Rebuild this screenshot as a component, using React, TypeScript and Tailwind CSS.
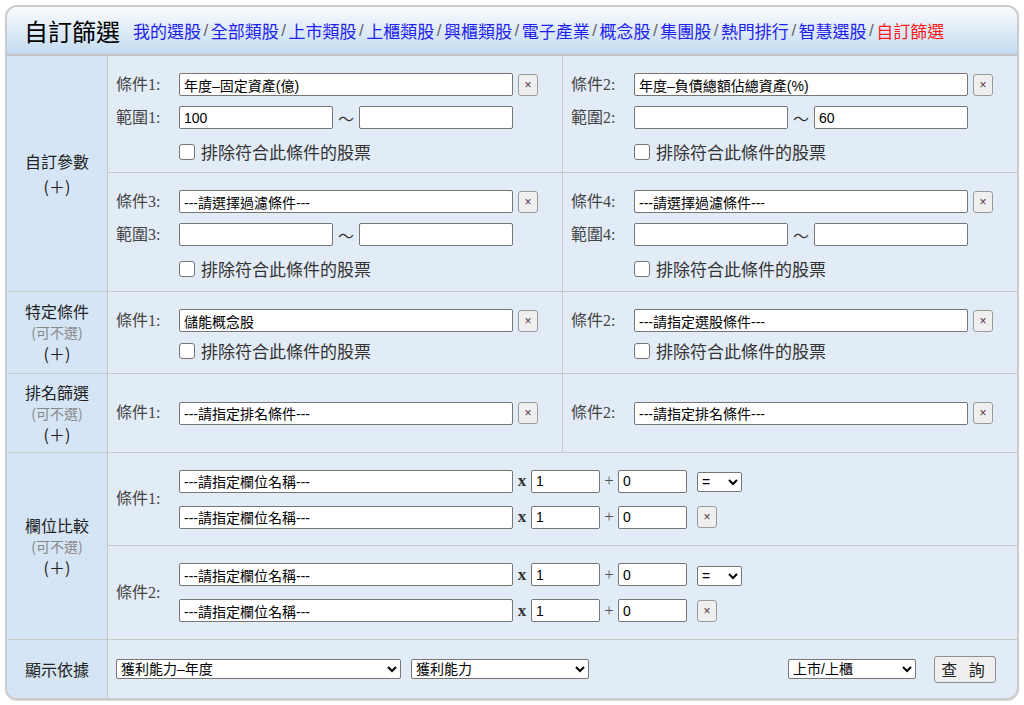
import React from "react";

const serif = "font-['Liberation_Serif','Noto_Sans_CJK_TC',serif]";
const sans = "font-['Liberation_Sans','Noto_Sans_CJK_TC',sans-serif]";
const cjk = "font-['Noto_Sans_CJK_TC','Liberation_Sans',sans-serif]";

const navLinks = ["我的選股", "全部類股", "上市類股", "上櫃類股", "興櫃類股", "電子產業", "概念股", "集團股", "熱門排行", "智慧選股"];

function Field({ value = "", className = "w-[334px]" }: { value?: string; className?: string }) {
  return (
    <input
      defaultValue={value}
      className={`${className} h-[23px] shrink-0 bg-white border border-[#767676] rounded-[2px] px-[4px] text-[14px] text-black outline-none ${sans}`}
    />
  );
}

function XBtn() {
  return (
    <button className={`w-[20px] h-[22px] shrink-0 bg-[#efefef] border border-[#9a9a9a] rounded-[3px] text-[12px] leading-none text-[#553344] flex items-center justify-center ${sans}`}>
      ×
    </button>
  );
}

function Label({ children }: { children: React.ReactNode }) {
  return <span className={`w-[63px] shrink-0 text-[16px] text-[#444] ${serif}`}>{children}</span>;
}

function Exclude() {
  return (
    <label className="flex items-center h-[22px] gap-[6px]">
      <input type="checkbox" className="appearance-none w-[16px] h-[16px] m-0 bg-white border border-[#767676] rounded-[3px]" />
      <span className={`text-[17px] text-[#333] ${cjk}`}>排除符合此條件的股票</span>
    </label>
  );
}

function RangeCell({ n, cond, from = "", to = "", left }: { n: number; cond: string; from?: string; to?: string; left?: boolean }) {
  return (
    <div className={`pt-[17px] pl-[8px] ${left ? "w-[455px] border-r border-[#c8c8c8]" : "flex-1"}`}>
      <div className="flex items-center h-[23px]">
        <Label>條件{n}:</Label>
        <Field value={cond} />
        <div className="ml-[5px]">
          <XBtn />
        </div>
      </div>
      <div className="flex items-center h-[23px] mt-[10px]">
        <Label>範圍{n}:</Label>
        <Field value={from} className="w-[154px]" />
        <span className={`w-[26px] text-center text-[16px] text-[#333] ${cjk}`}>～</span>
        <Field value={to} className="w-[154px]" />
      </div>
      <div className="mt-[12px] ml-[63px]">
        <Exclude />
      </div>
    </div>
  );
}

function SimpleCell({ n, cond, exclude, left }: { n: number; cond: string; exclude?: boolean; left?: boolean }) {
  return (
    <div className={`pl-[8px] flex flex-col ${exclude ? "pt-[17px]" : "justify-center"} ${left ? "w-[455px] border-r border-[#c8c8c8]" : "flex-1"}`}>
      <div className="flex items-center h-[23px]">
        <Label>條件{n}:</Label>
        <Field value={cond} />
        <div className="ml-[5px]">
          <XBtn />
        </div>
      </div>
      {exclude && (
        <div className="mt-[8px] ml-[63px]">
          <Exclude />
        </div>
      )}
    </div>
  );
}

function Side({ title, optional = true }: { title: string; optional?: boolean }) {
  return (
    <div className={`w-[101px] shrink-0 bg-[#d5e5f5] border-r border-[#c8c8c8] flex flex-col items-center justify-center leading-[21px] ${cjk}`}>
      <span className="text-[16px] text-[#222]">{title}</span>
      {optional && <span className="text-[14px] text-[#888]">(可不選)</span>}
      <span className={`text-[16px] text-[#222] ${optional ? "" : "mt-[4px]"}`}>(＋)</span>
    </div>
  );
}

function CompareLine({ last }: { last?: boolean }) {
  return (
    <div className="flex items-center h-[23px]">
      <Field value="---請指定欄位名稱---" />
      <span className={`w-[18px] text-center text-[17px] font-bold text-[#333] ${serif}`}>x</span>
      <Field value="1" className="w-[69px]" />
      <span className={`w-[18px] text-center text-[17px] text-[#555] ${serif}`}>+</span>
      <Field value="0" className="w-[69px]" />
      <div className="ml-[10px]">
        {last ? (
          <XBtn />
        ) : (
          <select className={`w-[45px] h-[20px] bg-white border border-[#767676] rounded-[2px] text-[14px] text-black ${sans}`}>
            <option>=</option>
          </select>
        )}
      </div>
    </div>
  );
}

function CompareCell({ n, top }: { n: number; top?: boolean }) {
  return (
    <div className={`flex items-center pl-[8px] ${top ? "h-[93px] border-b border-[#c8c8c8]" : "h-[93px]"}`}>
      <Label>條件{n}:</Label>
      <div className="flex flex-col gap-[13px]">
        <CompareLine />
        <CompareLine last />
      </div>
    </div>
  );
}

export default function App() {
  return (
    <div className="bg-white min-h-[705px] pt-[5px] px-[5px]">
      <div className="border-2 border-[#cbcbcb] rounded-[12px] overflow-hidden bg-[#e2ecf7] shadow-[0_1px_1px_rgba(0,0,0,0.15)]">
        <div className="h-[49px] flex items-center pl-[17px] bg-gradient-to-b from-[#f9fbfd] to-[#c4dbf0] border-b-2 border-[#c4c4c4]">
          <h1 className={`text-[24px] text-black font-normal ${cjk}`}>自訂篩選</h1>
          <nav className={`ml-[13px] flex items-center text-[17px] ${cjk}`}>
            {navLinks.map((l) => (
              <React.Fragment key={l}>
                <a href="#" className="text-[#1f1ff0]">{l}</a>
                <span className={`px-[2.5px] text-[#666] ${sans}`}>/</span>
              </React.Fragment>
            ))}
            <a href="#" className="text-[#ff1a1a]">自訂篩選</a>
          </nav>
        </div>

        <div className="flex border-b border-[#c8c8c8]">
          <div className={`w-[101px] shrink-0 bg-[#d5e5f5] border-r border-[#c8c8c8] flex flex-col items-center justify-center leading-[25px] ${cjk}`}>
            <span className="text-[16px] text-[#222]">自訂參數</span>
            <span className="text-[16px] text-[#222]">(＋)</span>
          </div>
          <div className="flex-1">
            <div className="flex h-[117px] border-b border-[#c8c8c8]">
              <RangeCell n={1} cond="年度–固定資產(億)" from="100" left />
              <RangeCell n={2} cond="年度–負債總額佔總資產(%)" to="60" />
            </div>
            <div className="flex h-[118px]">
              <RangeCell n={3} cond="---請選擇過濾條件---" left />
              <RangeCell n={4} cond="---請選擇過濾條件---" />
            </div>
          </div>
        </div>

        <div className="flex h-[82px] border-b border-[#c8c8c8]">
          <Side title="特定條件" />
          <div className="flex-1 flex">
            <SimpleCell n={1} cond="儲能概念股" exclude left />
            <SimpleCell n={2} cond="---請指定選股條件---" exclude />
          </div>
        </div>

        <div className="flex h-[79px] border-b border-[#c8c8c8]">
          <Side title="排名篩選" />
          <div className="flex-1 flex">
            <SimpleCell n={1} cond="---請指定排名條件---" left />
            <SimpleCell n={2} cond="---請指定排名條件---" />
          </div>
        </div>

        <div className="flex border-b border-[#c8c8c8]">
          <Side title="欄位比較" />
          <div className="flex-1">
            <CompareCell n={1} top />
            <CompareCell n={2} />
          </div>
        </div>

        <div className="flex h-[58px]">
          <div className={`w-[101px] shrink-0 bg-[#d5e5f5] border-r border-[#c8c8c8] flex items-center justify-center text-[16px] text-[#222] ${cjk}`}>
            顯示依據
          </div>
          <div className={`flex-1 flex items-center pl-[8px] pr-[21px] text-[14px] ${sans}`}>
            <select className="w-[285px] h-[20px] bg-white border border-[#767676] rounded-[2px] text-black">
              <option>獲利能力–年度</option>
            </select>
            <select className="ml-[10px] w-[178px] h-[20px] bg-white border border-[#767676] rounded-[2px] text-black">
              <option>獲利能力</option>
            </select>
            <select className="ml-auto w-[128px] h-[20px] bg-white border border-[#767676] rounded-[2px] text-black">
              <option>上市/上櫃</option>
            </select>
            <button className={`ml-[18px] w-[62px] h-[27px] bg-[#efefef] border border-[#8f8f8f] rounded-[3px] text-[16px] text-[#222] tracking-[4px] ${cjk}`}>
              查 詢
            </button>
          </div>
        </div>
      </div>
    </div>
  );
}
